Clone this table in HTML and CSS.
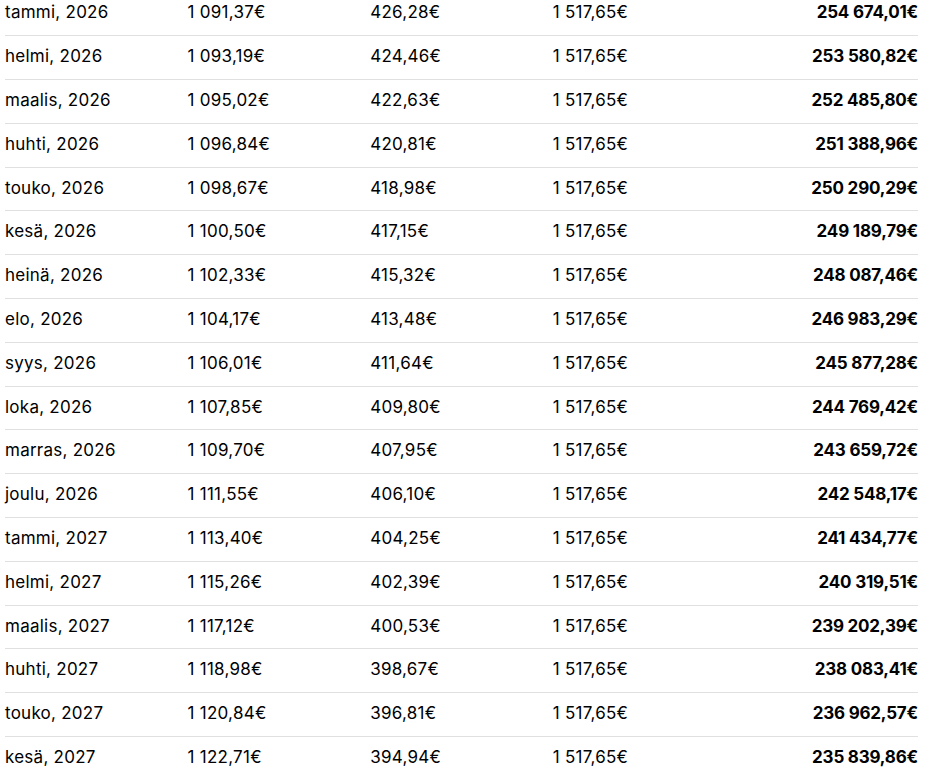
FILE: index.html
```html
<!DOCTYPE html>
<html lang="fi">
<head>
<meta charset="utf-8">
<title>Lainan lyhennystaulukko</title>
<link rel="stylesheet" href="styles.css">
</head>
<body>
<div class="wrap">
<table class="schedule">
<tbody>
<tr><td>tammi, 2026</td><td>1 091,37€</td><td>426,28€</td><td>1 517,65€</td><td class="bal">254 674,01€</td></tr>
<tr><td>helmi, 2026</td><td>1 093,19€</td><td>424,46€</td><td>1 517,65€</td><td class="bal">253 580,82€</td></tr>
<tr><td>maalis, 2026</td><td>1 095,02€</td><td>422,63€</td><td>1 517,65€</td><td class="bal">252 485,80€</td></tr>
<tr><td>huhti, 2026</td><td>1 096,84€</td><td>420,81€</td><td>1 517,65€</td><td class="bal">251 388,96€</td></tr>
<tr><td>touko, 2026</td><td>1 098,67€</td><td>418,98€</td><td>1 517,65€</td><td class="bal">250 290,29€</td></tr>
<tr><td>kesä, 2026</td><td>1 100,50€</td><td>417,15€</td><td>1 517,65€</td><td class="bal">249 189,79€</td></tr>
<tr><td>heinä, 2026</td><td>1 102,33€</td><td>415,32€</td><td>1 517,65€</td><td class="bal">248 087,46€</td></tr>
<tr><td>elo, 2026</td><td>1 104,17€</td><td>413,48€</td><td>1 517,65€</td><td class="bal">246 983,29€</td></tr>
<tr><td>syys, 2026</td><td>1 106,01€</td><td>411,64€</td><td>1 517,65€</td><td class="bal">245 877,28€</td></tr>
<tr><td>loka, 2026</td><td>1 107,85€</td><td>409,80€</td><td>1 517,65€</td><td class="bal">244 769,42€</td></tr>
<tr><td>marras, 2026</td><td>1 109,70€</td><td>407,95€</td><td>1 517,65€</td><td class="bal">243 659,72€</td></tr>
<tr><td>joulu, 2026</td><td>1 111,55€</td><td>406,10€</td><td>1 517,65€</td><td class="bal">242 548,17€</td></tr>
<tr><td>tammi, 2027</td><td>1 113,40€</td><td>404,25€</td><td>1 517,65€</td><td class="bal">241 434,77€</td></tr>
<tr><td>helmi, 2027</td><td>1 115,26€</td><td>402,39€</td><td>1 517,65€</td><td class="bal">240 319,51€</td></tr>
<tr><td>maalis, 2027</td><td>1 117,12€</td><td>400,53€</td><td>1 517,65€</td><td class="bal">239 202,39€</td></tr>
<tr><td>huhti, 2027</td><td>1 118,98€</td><td>398,67€</td><td>1 517,65€</td><td class="bal">238 083,41€</td></tr>
<tr><td>touko, 2027</td><td>1 120,84€</td><td>396,81€</td><td>1 517,65€</td><td class="bal">236 962,57€</td></tr>
<tr><td>kesä, 2027</td><td>1 122,71€</td><td>394,94€</td><td>1 517,65€</td><td class="bal">235 839,86€</td></tr>
</tbody>
</table>
</div>
</body>
</html>
```
FILE: styles.css
```css
html, body {
  margin: 0;
  padding: 0;
  background: #ffffff;
}
body {
  font-family: "Inter", "Noto Sans", sans-serif;
  color: #000000;
  overflow: hidden;
}
.wrap {
  padding: 0 8px 0 5px;
  margin-top: -8px;
}
.schedule {
  width: 913px;
  border-collapse: collapse;
  table-layout: fixed;
}
.schedule td {
  height: 43.8px;
  padding: 0 0 3px 0;
  box-sizing: border-box;
  font-size: 17px;
  letter-spacing: 0.25px;
  line-height: 20px;
  vertical-align: middle;
  border-bottom: 1px solid #e0e0e0;
  white-space: nowrap;
}
.schedule td.bal {
  text-align: right;
  font-weight: 700;
  letter-spacing: -0.2px;
}
```
